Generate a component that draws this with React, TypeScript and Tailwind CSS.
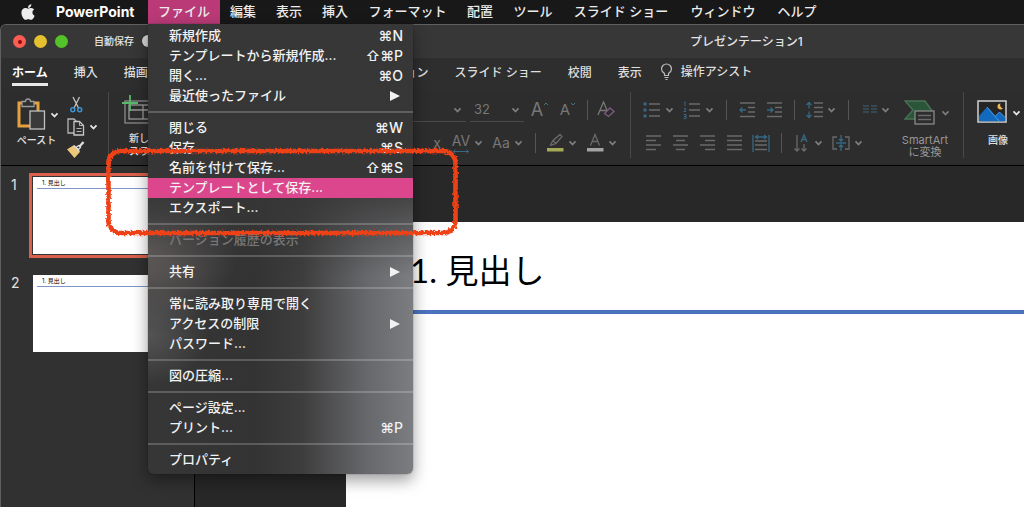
import type { ReactNode } from "react";
import { FaApple } from "react-icons/fa";

const menuTitles = ["ファイル", "編集", "表示", "挿入", "フォーマット", "配置", "ツール", "スライド ショー", "ウィンドウ", "ヘルプ"];

type Item = { label: string; keys?: string; sub?: boolean; active?: boolean; disabled?: boolean };

const fileMenu: Item[][] = [
  [
    { label: "新規作成", keys: "⌘N" },
    { label: "テンプレートから新規作成...", keys: "⇧⌘P" },
    { label: "開く...", keys: "⌘O" },
    { label: "最近使ったファイル", sub: true },
  ],
  [
    { label: "閉じる", keys: "⌘W" },
    { label: "保存", keys: "⌘S" },
    { label: "名前を付けて保存...", keys: "⇧⌘S" },
    { label: "テンプレートとして保存...", active: true },
    { label: "エクスポート..." },
  ],
  [{ label: "バージョン履歴の表示", disabled: true }],
  [{ label: "共有", sub: true }],
  [{ label: "常に読み取り専用で開く" }, { label: "アクセスの制限", sub: true }, { label: "パスワード..." }],
  [{ label: "図の圧縮..." }],
  [{ label: "ページ設定..." }, { label: "プリント...", keys: "⌘P" }],
  [{ label: "プロパティ" }],
];

const leftTabs = ["ホーム", "挿入", "描画"];
const rightTabs = ["アニメーション", "スライド ショー", "校閲", "表示"];

function MenuBar() {
  return (
    <nav aria-label="メニューバー" className="flex h-6 shrink-0 items-stretch bg-[#181818] text-[13px] font-medium text-[#ececec]">
      <button aria-label="アップル" className="flex w-14 items-center justify-center">
        <FaApple size={18} />
      </button>
      <button className="w-[92px] text-left text-sm font-bold text-white">PowerPoint</button>
      <div className="grid grid-cols-[72px_46px_46px_46px_99px_46px_60px_116px_88px_60px]">
        {menuTitles.map((t, i) => (
          <button key={t} className={i === 0 ? "bg-[#b93a77] whitespace-nowrap" : "whitespace-nowrap"}>
            {t}
          </button>
        ))}
      </div>
    </nav>
  );
}

function FileMenu() {
  return (
    <div
      role="menu"
      className="absolute left-[148px] top-6 z-10 w-[265px] rounded-b-md pb-1 pt-0.5 text-[13px] font-medium text-[#f2f2f2] shadow-[0_6px_16px_rgba(0,0,0,0.4),0_0_1px_rgba(0,0,0,0.8)] bg-[linear-gradient(to_bottom,#373737_0%,#363636_34%,transparent_56%),radial-gradient(ellipse_90px_80px_at_0%_50%,rgba(150,140,138,0.5),transparent),radial-gradient(ellipse_60px_50px_at_0%_69%,rgba(140,140,140,0.35),transparent),linear-gradient(to_right,#363636_0%,#333_40%,#3d3d3d_58%,#66676a_82%,#7c7d80_100%)]"
    >
      {fileMenu.map((group, g) => (
        <div key={g}>
          {g > 0 && (
            <div role="separator" className="flex h-3 items-center">
              <div className="h-0.5 w-full bg-white/20" />
            </div>
          )}
          {group.map((it) => (
            <button
              key={it.label}
              role="menuitem"
              disabled={it.disabled}
              className={
                "flex h-5 w-full items-center justify-between pl-[21px] pr-2.5 " +
                (it.active ? "bg-[#dc468d]" : it.disabled ? "text-[#777]" : "")
              }
            >
              <span>{it.label}</span>
              {it.keys && <span className="text-sm">{it.keys}</span>}
              {it.sub && (
                <svg width="13" height="10" viewBox="0 0 13 10" fill="currentColor" aria-hidden="true">
                  <path d="M0 0 L10 5 L0 10Z" />
                </svg>
              )}
            </button>
          ))}
        </div>
      ))}
    </div>
  );
}

function Chevron({ bright }: { bright?: boolean }) {
  return (
    <svg width="9" height="8" viewBox="0 0 9 8" fill="none" stroke={bright ? "#e6e6e6" : "#7c7c7c"} strokeWidth="1.8" aria-hidden="true">
      <path d="M1.5 2.3 L4.5 5.5 L7.5 2.3" />
    </svg>
  );
}

function Icon({ w = 18, h = 20, children }: { w?: number; h?: number; children: ReactNode }) {
  return (
    <svg width={w} height={h} viewBox={`0 0 ${w} ${h}`} fill="none" stroke="#6a6a6a" strokeWidth="1.3" aria-hidden="true" className="shrink-0">
      {children}
    </svg>
  );
}

function Split({ label, children }: { label: string; children: ReactNode }) {
  return (
    <button aria-label={label} className="flex w-8 shrink-0 items-center gap-1">
      {children}
      <Chevron />
    </button>
  );
}

function Tool({ label, children }: { label: string; children: ReactNode }) {
  return (
    <button aria-label={label} className="flex w-[19px] shrink-0 items-center justify-center">
      {children}
    </button>
  );
}

function Bar() {
  return (
    <div className="flex w-1.5 shrink-0 justify-center">
      <div className="h-5 w-px bg-[#555]" />
    </div>
  );
}

function GroupLine() {
  return <div className="mt-0.5 h-[66px] w-px shrink-0 bg-[#484848]" />;
}

const row = "flex h-8 items-center gap-2";

function Ribbon() {
  return (
    <div className="flex h-[75px] shrink-0 items-start bg-[#2d2d2d] text-[#e0e0e0]">
      <div className="flex w-[107px] shrink-0 gap-2 pl-[13px] pt-1">
        <button className="flex flex-col pt-1 text-[10px] leading-4 font-medium">
          <span className="flex items-center gap-1 pl-0.5">
            <Icon w={30} h={34}>
              <rect x="3" y="5" width="19" height="23" stroke="#e5a140" strokeWidth="3" />
              <path d="M6 3.5h3.5a2.5 2.5 0 0 1 5 0H18v5H6z" fill="#2d2d2d" stroke="#999" />
              <rect x="14" y="13" width="14.5" height="18" fill="#3a3a3a" stroke="#c0c0c0" />
            </Icon>
            <Chevron bright />
          </span>
          <span>ペースト</span>
        </button>
        <div className="flex flex-col gap-1 pt-0.5">
          <button aria-label="切り取り" className="flex">
            <Icon w={18} h={18}>
              <path d="M6 1 L11.5 12 M12.5 1 L7 12" stroke="#c4c4c4" />
              <circle cx="5.8" cy="13.8" r="2" stroke="#3c94d4" strokeWidth="1.5" />
              <circle cx="12.7" cy="13.8" r="2" stroke="#3c94d4" strokeWidth="1.5" />
            </Icon>
          </button>
          <button aria-label="コピー" className="flex items-center gap-1">
            <Icon w={18} h={18}>
              <path d="M7 15H1V1h6l3 3" stroke="#b5b5b5" />
              <path d="M7 3.5h5.5l4 4V17H7z" fill="#2d2d2d" stroke="#c8c8c8" />
              <path d="M12.5 3.5v4h4M9.5 10.5h5M9.5 13.5h5" stroke="#b5b5b5" strokeWidth="1" />
            </Icon>
            <Chevron bright />
          </button>
          <button aria-label="書式のコピー" className="flex">
            <Icon w={18} h={18}>
              <path d="M1 9.5 L6.5 6 L12 12 L7.5 17z" fill="#ecc878" stroke="#ecc878" />
              <path d="M7 5.5 L12.5 11.5 M9 7.5l2.5-2 2 2-2 2z" stroke="#ddd" />
              <path d="M12.5 6.5 L16.5 2" stroke="#ddd" strokeWidth="2.4" />
            </Icon>
          </button>
        </div>
      </div>
      <GroupLine />
      <button className="flex w-[110px] shrink-0 flex-col pl-3 pt-1 text-[10px] leading-[13px] font-medium">
        <Icon w={50} h={38}>
          <rect x="4" y="7" width="42" height="22" stroke="#8b8b8b" />
          <rect x="8" y="11" width="34" height="14" stroke="#999" />
          <path d="M8 16h34M22 11v14" stroke="#999" />
          <path d="M9 1v16M1 9h16" stroke="#58b969" strokeWidth="1.8" />
        </Icon>
        <span className="pl-2 text-left">
          新しい
          <br />
          スライド
        </span>
      </button>
      <div className="flex w-[411px] shrink-0 flex-col gap-px pr-3 pt-1">
        <div className="flex h-8 items-center justify-end gap-1">
          <button aria-label="フォント" className="flex h-6 w-[200px] items-center justify-end border-b border-[#4a4a4a] pr-1">
            <Chevron />
          </button>
          <button aria-label="フォント サイズ" className="flex h-6 w-[54px] items-center justify-between border-b border-[#4a4a4a] pl-1 pr-1 text-[13px] text-[#777]">
            32
            <Chevron />
          </button>
          <button aria-label="フォント サイズの拡大" className="flex w-6 justify-center text-lg leading-5 text-[#777]">
            A
            <Icon w={6} h={12}><path d="M1 5l2-2 2 2" strokeWidth="1" stroke="#4b7388" /></Icon>
          </button>
          <button aria-label="フォント サイズの縮小" className="flex w-6 justify-center text-[15px] leading-5 text-[#777]">
            A
            <Icon w={6} h={12}><path d="M1 3l2 2 2-2" strokeWidth="1" stroke="#4b7388" /></Icon>
          </button>
          <Bar />
          <button aria-label="書式のクリア" className="flex w-6 justify-center">
            <Icon w={20} h={20}>
              <path d="M2 15 L7.5 2 L13 15 M4 10.5h7" stroke="#777" />
              <path d="M8.5 13.5 L14 8 L18 11.5 L12.5 16.5z" fill="#2d2d2d" stroke="#7d5a80" />
            </Icon>
          </button>
        </div>
        <div className={row + " justify-end"}>
          <button aria-label="上付き" className="w-3.5 text-sm text-[#777]">x</button>
          <Split label="文字の間隔">
            <span className="flex w-[18px] flex-col items-center text-[14px] leading-4 text-[#777]">
              AV
              <Icon w={18} h={5}><path d="M1 2.5h16M3.5 .5l-2 2 2 2M14.5 .5l2 2-2 2" stroke="#356985" strokeWidth="1" /></Icon>
            </span>
          </Split>
          <Split label="大文字と小文字">
            <span className="w-[18px] text-sm text-[#777]">Aa</span>
          </Split>
          <Bar />
          <Split label="蛍光ペン">
            <Icon>
              <path d="M4.5 12 L7 7.5 L14 1.5 L16 3.5 L10 10.5 L5.5 12z M7 7.5l3 3" />
              <rect x="1" y="15" width="16.5" height="3.5" fill="#a5aa56" stroke="none" />
            </Icon>
          </Split>
          <Split label="フォントの色">
            <Icon>
              <path d="M4.5 12.5 L9 1.5 L13.5 12.5 M6.2 8.5h5.6" />
              <rect x="1" y="15" width="16.5" height="3.5" fill="#a3a3a3" stroke="none" />
            </Icon>
          </Split>
        </div>
      </div>
      <GroupLine />
      <div className="flex shrink-0 flex-col gap-px pl-3 pt-1">
        <div className={row}>
          <Split label="箇条書き">
            <Icon>
              <path d="M6 4h11M6 10h11M6 16h11" />
              <path d="M.5 4h3M.5 10h3M.5 16h3" stroke="#356985" strokeWidth="3" />
            </Icon>
          </Split>
          <Split label="段落番号">
            <Icon>
              <path d="M6 4h11M6 10h11M6 16h11" />
              <path d="M1 2.5l1-.5v4M.7 8.500h2v1.500l-2 1.500h2.300M.7 14.500h2.300v4h-2.300M1 16.500h2" stroke="#356985" strokeWidth="1" />
            </Icon>
          </Split>
          <Bar />
          <Tool label="インデントを減らす">
            <Icon>
              <path d="M2 3h15M10 7.5h7M10 12h7M2 16.5h15" />
              <path d="M8 10H2M4.5 7.5L2 10l2.5 2.5" stroke="#356985" />
            </Icon>
          </Tool>
          <Tool label="インデントを増やす">
            <Icon>
              <path d="M2 3h15M10 7.5h7M10 12h7M2 16.5h15" />
              <path d="M2 10h6M5.5 7.5L8 10l-2.5 2.5" stroke="#356985" />
            </Icon>
          </Tool>
          <Bar />
          <Split label="行間">
            <Icon>
              <path d="M9 3h9M9 7.5h9M9 12h9M9 16.5h9" />
              <path d="M4 2.5v6M1.500 5L4 2.500 6.500 5M4 11.500v6M1.500 15L4 17.500 6.500 15" stroke="#356985" />
            </Icon>
          </Split>
          <Bar />
          <Split label="段組み">
            <Icon>
              <path d="M4 6h6M4 9h6M4 12h6M12 6h6M12 9h6M12 12h6" stroke="#3f6276" strokeWidth="1.1" />
            </Icon>
          </Split>
        </div>
        <div className={row}>
          <Tool label="左揃え"><Icon><path d="M2 3h15M2 7.5h10M2 12h15M2 16.5h10" /></Icon></Tool>
          <Tool label="中央揃え"><Icon><path d="M2 3h15M5 7.5h9M2 12h15M5 16.5h9" /></Icon></Tool>
          <Tool label="右揃え"><Icon><path d="M2 3h15M7 7.5h10M2 12h15M7 16.5h10" /></Icon></Tool>
          <Tool label="両端揃え"><Icon><path d="M2 3h15M2 7.5h15M2 12h15M2 16.5h15" /></Icon></Tool>
          <Tool label="均等割り付け">
            <Icon>
              <path d="M3 8h12M3 12h12M3 16.5h12" />
              <path d="M1 2v17M17 2v17M3.5 4h11M6 2L3.5 4 6 6M12 2l2.5 2L12 6" stroke="#356985" />
            </Icon>
          </Tool>
          <Bar />
          <Split label="文字列の方向">
            <Icon>
              <path d="M5 2v16M2.5 15.5L5 18l2.5-2.5M12 11v7M9.5 15.5L12 18l2.5-2.5" />
              <path d="M9 9l3-7 3 7M10 6.5h4" stroke="#356985" />
            </Icon>
          </Split>
          <Split label="文字の配置">
            <Icon>
              <path d="M5 4H1v12h4M13 4h4v12h-4" />
              <path d="M9 2v6M9 18v-6M7 6l2 2 2-2M7 14l2-2 2 2M4 10h10" stroke="#356985" />
            </Icon>
          </Split>
        </div>
      </div>
      <button className="ml-2.5 flex w-[62px] shrink-0 flex-col pt-2 text-[11px] leading-3 text-[#979797]">
        <span className="flex items-center gap-1 pl-0.5">
          <Icon w={34} h={30}>
            <path d="M2 3h20l8 11-4 7H2l8-9z" fill="#2b5538" stroke="#4b7257" />
            <rect x="12" y="13" width="19" height="13" fill="#2d2d2d" stroke="#8a8a8a" />
            <path d="M15 17.5h13M15 21.5h13" />
          </Icon>
          <Chevron />
        </span>
        <span className="w-12 pt-1.5 text-center">
          SmartArt
          <br />
          に変換
        </span>
      </button>
      <GroupLine />
      <button className="flex w-[60px] shrink-0 flex-col pl-3 pt-2 text-[10px] leading-4 font-medium">
        <span className="flex items-center gap-1">
          <Icon w={32} h={30}>
            <rect x="2" y="3" width="28" height="21" fill="#252525" stroke="#d2d2d2" strokeWidth="1.5" />
            <path d="M3 18l8-9 8.5 9 4-4 5.7 5.5v3.7H3z" fill="#1269bd" stroke="none" />
            <path d="M11 9l12 14M19.5 18l4-4 5.5 5.5" stroke="#4ba0e6" strokeWidth="1" />
            <path d="M24.5 5.5a3 3 0 1 0 2.5 4.5 3 3 0 0 1-2.5-4.5z" fill="#efb255" stroke="none" />
          </Icon>
          <Chevron bright />
        </span>
        <span className="w-11 pt-1 text-center">画像</span>
      </button>
    </div>
  );
}

function Thumb({ n, selected }: { n: number; selected?: boolean }) {
  return (
    <li className="flex items-start">
      <span className="w-7 pl-2.5 text-sm leading-6 text-[#e2e2e2]">{n}</span>
      <button
        aria-label={`スライド ${n}`}
        className={"border-[3px] p-px " + (selected ? "border-[#d9604c] bg-[#333]" : "border-transparent")}
      >
        <span className="block h-[77px] w-[138px] bg-white px-1 pt-0.5 text-left text-[6px] leading-[8px] text-black">
          <span className="block h-[10px] border-b border-[#7d96c6] pl-[5px]">1. 見出し</span>
        </span>
      </button>
    </li>
  );
}

function Annotation() {
  return (
    <svg
      className="pointer-events-none absolute left-[100px] top-[142px] z-20"
      width="364"
      height="98"
      viewBox="0 0 364 98"
      fill="none"
      aria-hidden="true"
    >
      <filter id="crayon" x="-5%" y="-10%" width="110%" height="120%">
        <feTurbulence type="fractalNoise" baseFrequency="0.5" numOctaves="2" seed="4" />
        <feDisplacementMap in="SourceGraphic" scale="5" xChannelSelector="R" yChannelSelector="G" />
      </filter>
      <rect x="8.5" y="9" width="347" height="82" rx="12" stroke="#ee4218" strokeWidth="4.6" filter="url(#crayon)" />
    </svg>
  );
}

const tab = "shrink-0 whitespace-nowrap border-b-[3px] pt-1 ";

export default function App() {
  return (
    <div className="relative flex h-screen flex-col overflow-hidden bg-[#181818] font-['Inter','Noto_Sans_CJK_JP',sans-serif]">
      <MenuBar />
      <div className="flex min-h-0 flex-1 flex-col overflow-hidden rounded-tl-md border-l border-t border-[#606060] bg-[#2d2d2d]">
        <header className="flex h-[33px] shrink-0 items-center bg-[#373737] text-xs text-[#e4e4e4]">
          <div className="flex w-[93px] shrink-0 gap-2 pl-3">
            <button aria-label="閉じる" className="flex size-[13px] items-center justify-center rounded-full bg-[#fb5c53]">
              <span className="size-1 rounded-full bg-[#8c0a08]" />
            </button>
            <button aria-label="しまう" className="size-[13px] rounded-full bg-[#e6c12f]" />
            <button aria-label="拡大" className="size-[13px] rounded-full bg-[#54c22b]" />
          </div>
          <label className="flex w-[596px] shrink-0 items-center gap-2 text-[10px] font-medium">
            自動保存
            <input type="checkbox" role="switch" className="h-3 w-6 appearance-none rounded-full bg-[#d8d8d8]" />
          </label>
          <h1 className="whitespace-nowrap font-medium">プレゼンテーション1</h1>
        </header>
        <nav aria-label="リボン" className="flex h-8 shrink-0 items-stretch bg-[#2e2e2e] pb-1 pl-[11px] text-xs font-medium text-[#dedede]">
          <div className="flex w-[333px] shrink-0 gap-[26px]">
            {leftTabs.map((t, i) => (
              <button key={t} className={tab + (i === 0 ? "border-[#e8e8e8] font-bold text-white" : "border-transparent")}>
                {t}
              </button>
            ))}
          </div>
          <div className="flex shrink-0 gap-[26px]">
            {rightTabs.map((t) => (
              <button key={t} className={tab + "border-transparent"}>
                {t}
              </button>
            ))}
          </div>
          <button className="flex shrink-0 items-center gap-2 pl-[18px]">
            <Icon w={13} h={18}>
              <path d="M4.5 12.5v-2C2.5 9 1.5 8 1.5 6a5 5 0 0 1 10 0c0 2-1 3-3 4.5v2zM4.500 14.500h4M5.500 16.500h2" stroke="#bdbdbd" strokeWidth="1.2" />
            </Icon>
            操作アシスト
          </button>
        </nav>
        <Ribbon />
        <main className="flex min-h-0 flex-1 border-t border-black bg-[#282828]">
          <ol className="flex w-[194px] shrink-0 flex-col gap-[13px] overflow-hidden border-r border-black bg-[#313131] pt-[7px]">
            <Thumb n={1} selected />
            <Thumb n={2} />
          </ol>
          <section className="flex min-w-0 flex-1 flex-col pl-[151px] pt-14">
            <div className="flex-1 bg-white pt-6">
              <h2 className="h-[68px] border-b-4 border-[#4a72be] pl-16 font-['Lato','Noto_Sans_CJK_JP',sans-serif] text-[33px] leading-[48px] text-black">
                1. 見出し
              </h2>
            </div>
          </section>
        </main>
      </div>
      <FileMenu />
      <Annotation />
    </div>
  );
}
